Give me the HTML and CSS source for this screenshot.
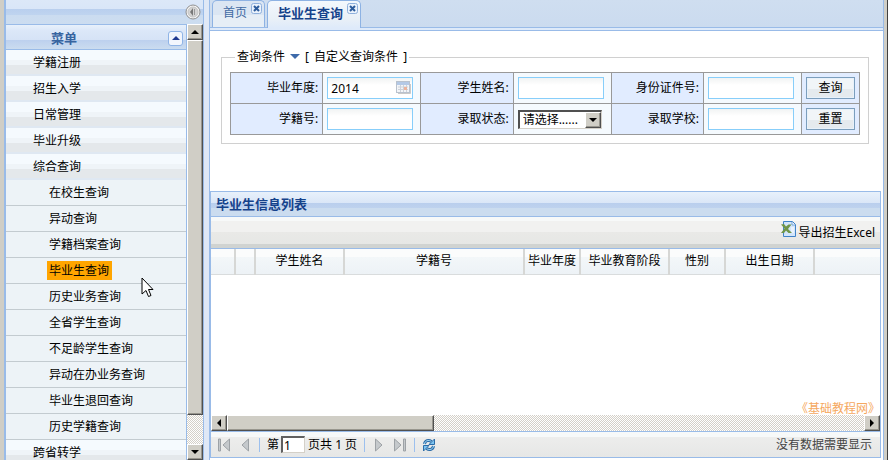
FILE: index.html
```html
<!DOCTYPE html>
<html lang="zh-CN">
<head>
  <meta charset="UTF-8">
  <title>毕业生查询</title>
  <link rel="stylesheet" href="styles.css">
</head>
<body>
<div class="page">
  <aside class="sidebar">
    <div class="side-top">
      <button type="button" class="collapse" aria-label="收起">
        <svg width="16" height="16" viewBox="0 0 16 16"><circle cx="8" cy="8" r="7" fill="#f4f4f4" stroke="#8f8f8f"/><circle cx="8" cy="8" r="5" fill="#d4d4d4" stroke="#c4c4c4"/><path d="M8 4v8L5 8z" fill="#777"/><path d="M9.500 5v6" stroke="#999"/></svg>
      </button>
    </div>
    <div class="side-body">
      <nav class="menu">
        <div class="menu-head">
          <span>菜单</span>
          <button type="button" class="toggle" aria-label="折叠"><i class="up"></i></button>
        </div>
        <ul>
          <li class="group"><a href="#">学籍注册</a></li>
          <li class="group"><a href="#">招生入学</a></li>
          <li class="group"><a href="#">日常管理</a></li>
          <li class="group"><a href="#">毕业升级</a></li>
          <li class="group"><a href="#">综合查询</a></li>
          <li class="item"><a href="#">在校生查询</a></li>
          <li class="item"><a href="#">异动查询</a></li>
          <li class="item"><a href="#">学籍档案查询</a></li>
          <li class="item"><a href="#" class="current">毕业生查询</a></li>
          <li class="item"><a href="#">历史业务查询</a></li>
          <li class="item"><a href="#">全省学生查询</a></li>
          <li class="item"><a href="#">不足龄学生查询</a></li>
          <li class="item"><a href="#">异动在办业务查询</a></li>
          <li class="item"><a href="#">毕业生退回查询</a></li>
          <li class="item"><a href="#">历史学籍查询</a></li>
          <li class="group"><a href="#">跨省转学</a></li>
        </ul>
      </nav>
      <div class="scroll vertical">
        <button type="button" class="raised arrow" aria-label="向上"><i class="up"></i></button>
        <div class="raised thumb"></div>
        <button type="button" class="raised arrow" aria-label="向下"><i class="down"></i></button>
      </div>
    </div>
  </aside>

  <main class="main">
    <div class="tabs">
      <div class="tab">
        <a href="#">首页</a>
        <button type="button" class="close" aria-label="关闭"><svg width="11" height="11" viewBox="0 0 11 11"><rect x=".5" y=".5" width="10" height="10" rx="2" fill="#eaf2fc" stroke="#8fb0dc"/><path d="M3 3l5 5M8 3l-5 5" stroke="#2d5c9c" stroke-width="2"/></svg></button>
      </div>
      <div class="tab active">
        <a href="#">毕业生查询</a>
        <button type="button" class="close" aria-label="关闭"><svg width="11" height="11" viewBox="0 0 11 11"><rect x=".5" y=".5" width="10" height="10" rx="2" fill="#eaf2fc" stroke="#8fb0dc"/><path d="M3 3l5 5M8 3l-5 5" stroke="#2d5c9c" stroke-width="2"/></svg></button>
      </div>
    </div>

    <form class="search">
      <fieldset>
        <legend>查询条件<i class="drop"></i>[ <a href="#">自定义查询条件</a> ]</legend>
        <table class="conditions">
          <colgroup><col><col class="field"><col><col class="field"><col><col class="field"><col class="action"></colgroup>
          <tr>
            <th><label for="year">毕业年度:</label></th>
            <td>
              <div class="date">
                <input type="text" id="year" value="2014">
                <svg width="15" height="13" viewBox="0 0 15 13"><rect x=".5" y=".5" width="13" height="11" fill="#f3f5f8" stroke="#b9c2ce"/><path d="M1 1h12v3H1z" fill="#b4c9e6"/><path d="M2 6h10M2 8.500h10M4.500 4v7M7.500 4v7M10.500 4v7" stroke="#cdd2da"/><path d="M8 6h3v3H8z" fill="#ebb39c"/><path d="M2 12.500h12.500V3" fill="none" stroke="#c9c9c9"/></svg>
              </div>
            </td>
            <th><label for="name">学生姓名:</label></th>
            <td><input type="text" id="name"></td>
            <th><label for="idno">身份证件号:</label></th>
            <td><input type="text" id="idno"></td>
            <th class="act"><button type="submit">查询</button></th>
          </tr>
          <tr>
            <th><label for="code">学籍号:</label></th>
            <td><input type="text" id="code"></td>
            <th><label for="status">录取状态:</label></th>
            <td>
              <div class="pick">
                <select id="status"><option>请选择......</option></select>
                <span class="raised"><i class="down"></i></span>
              </div>
            </td>
            <th><label for="school">录取学校:</label></th>
            <td><input type="text" id="school"></td>
            <th class="act"><button type="reset">重置</button></th>
          </tr>
        </table>
      </fieldset>
    </form>

    <section class="panel">
      <h2>毕业生信息列表</h2>
      <div class="toolbar">
        <button type="button">
          <svg width="16" height="16" viewBox="0 0 16 16"><path d="M2.500.5h9l3 3v12h-12z" fill="#d3e5fa" stroke="#3f83c8"/><path d="M11 1v3h3" fill="#fff" stroke="#6fa3da"/><path d="M10 7h3M10 9h3M10 11h3" stroke="#fff"/><path d="M0 3.500l3-.5 2 2.500L7.500 3.500h3L7 8l4 4H7.500L5 9.500 3 12H0l3.500-4.500z" fill="#6f9548"/></svg>
          导出招生Excel
        </button>
      </div>
      <div class="grid">
        <table>
          <colgroup><col class="w24"><col class="w20"><col class="w89"><col class="w180"><col class="w56"><col class="w89"><col class="w56"><col class="w89"><col></colgroup>
          <thead>
            <tr><th></th><th></th><th>学生姓名</th><th>学籍号</th><th>毕业年度</th><th>毕业教育阶段</th><th>性别</th><th>出生日期</th><th></th></tr>
          </thead>
        </table>
        <span class="mark">《基础教程网》</span>
      </div>
      <div class="scroll">
        <button type="button" class="raised arrow" aria-label="向左"><i class="left"></i></button>
        <div class="raised thumb"></div>
        <button type="button" class="raised arrow" aria-label="向右"><i class="right"></i></button>
      </div>
      <div class="paging">
        <button type="button" aria-label="首页"><svg width="14" height="14" viewBox="0 0 14 14"><path d="M1.500 1h2v12h-2zM12.500 1v12L6 7z" fill="#c5c9cc" stroke="#9da2a6"/></svg></button>
        <button type="button" aria-label="上一页"><svg width="14" height="14" viewBox="0 0 14 14"><path d="M10.500 1v12L4 7z" fill="#c5c9cc" stroke="#9da2a6"/></svg></button>
        <span class="sep"></span>
        <label for="pageno">第</label><input type="text" id="pageno" value="1">
        <span class="total">页共 1 页</span>
        <span class="sep"></span>
        <button type="button" aria-label="下一页"><svg width="14" height="14" viewBox="0 0 14 14"><path d="M3.500 1v12L10 7z" fill="#c5c9cc" stroke="#9da2a6"/></svg></button>
        <button type="button" aria-label="末页"><svg width="14" height="14" viewBox="0 0 14 14"><path d="M10.500 1h2v12h-2zM1.500 1v12L8 7z" fill="#c5c9cc" stroke="#9da2a6"/></svg></button>
        <span class="sep"></span>
        <button type="button" aria-label="刷新"><svg width="14" height="14" viewBox="0 0 14 14"><path d="M2.500 6C3 2.500 6.500 1.500 9.500 3.500M11.500 8C11 11.500 7.500 12.500 4.500 10.500" fill="none" stroke="#2d6da8" stroke-width="3"/><path d="M2.500 6C3 2.500 6.500 1.500 9.500 3.500M11.500 8C11 11.500 7.500 12.500 4.500 10.500" fill="none" stroke="#a5dcf8"/><path d="M12.500 1v5.500H7zM1.500 13V7.500H7z" fill="#7cc4f0" stroke="#2d6da8"/></svg></button>
        <span class="msg">没有数据需要显示</span>
      </div>
    </section>
  </main>
</div>
<svg class="pointer" width="13" height="21" viewBox="0 0 13 21"><path d="M1 1v16l4-3.500 2.500 6 2.500-1-2.500-6H12z" fill="#fff" stroke="#000"/></svg>
</body>
</html>
```

FILE: styles.css
```css
* {
  box-sizing: border-box;
}
body {
  margin: 0;
  font: 12px/16px "Noto Sans", "Noto Sans CJK SC", sans-serif;
  color: #000;
  background: #dfe8f6;
}
a {
  color: inherit;
  text-decoration: none;
}
button, input, select {
  font: inherit;
  color: inherit;
  margin: 0;
  padding: 0;
}
button {
  border: 0;
  background: none;
}
svg {
  display: block;
}
.page {
  display: flex;
  gap: 5px;
  height: 100vh;
  border-left: 4px solid #d0cec6;
  border-right: 1px solid #404040;
  box-shadow: inset -3px 0 #d0cec6;
  padding-right: 3px;
  overflow: hidden;
}

/* left menu */
.sidebar {
  display: flex;
  flex-direction: column;
  width: 200px;
  flex: none;
  border-left: 2px solid #99bbe8;
  border-right: 1px solid #99bbe8;
}
.side-top {
  display: flex;
  justify-content: flex-end;
  align-items: center;
  height: 24px;
  flex: none;
  padding-right: 2px;
  background: linear-gradient(#dce8f8 0, #d9e6f8 9px, #b9cfee 9px, #bfd4ef 15px, #cbdcf0 15px, #ccddf0);
}
.side-body {
  display: flex;
  flex: 1;
  min-height: 0;
}
.menu {
  flex: 1;
  overflow: hidden;
  border-top: 1px solid #99bbe8;
  border-right: 1px solid #99bbe8;
}
.menu-head {
  display: flex;
  align-items: center;
  justify-content: space-between;
  height: 25px;
  padding: 2px 3px 0 45px;
  color: #3764a0;
  font-weight: bold;
  font-size: 13px;
  border-bottom: 1px solid #99bbe8;
  background: linear-gradient(#e8f1fb 0, #dbe7f8 6px, #d6e3f6 15px, #bcd0ee 15px, #cbdcef);
}
.toggle {
  display: flex;
  align-items: center;
  justify-content: center;
  width: 15px;
  height: 15px;
  border: 1px solid #8fb4e6;
  border-radius: 3px;
  background: #f2f6fd;
  color: #203a90;
}
.menu ul {
  list-style: none;
  margin: 0;
  padding: 0;
}
.menu li {
  display: flex;
  align-items: center;
  height: 26px;
}
.group {
  padding-left: 27px;
  border-bottom: 2px solid #dfe8f2;
  background: linear-gradient(#f5fafe 10px, #eff4f8 10px, #eff4f8 15px, #e4e8eb 15px);
}
.group a {
  padding-top: 2px;
}
.item {
  padding-left: 41px;
  border-bottom: 1px solid #c3cbd0;
  background: #edf3f7;
}
.item a {
  padding: 2px 3px 1px 2px;
}
.item .current {
  background: #ffa500;
}

/* classic scrollbars */
.raised {
  border: 1px solid #fff;
  border-right-color: #505050;
  border-bottom-color: #505050;
  box-shadow: inset -1px -1px #98968e;
  background: #d0cec6;
}
.scroll {
  display: flex;
  height: 16px;
  flex: none;
  background: repeating-conic-gradient(#d4d0c8 0 25%, #fff 0 50%) 0 0 / 2px 2px;
}
.scroll .arrow {
  display: flex;
  align-items: center;
  justify-content: center;
  width: 16px;
  height: 16px;
  flex: none;
}
.scroll .thumb {
  width: 31%;
  margin-right: auto;
}
.scroll.vertical {
  flex-direction: column;
  width: 16px;
  height: auto;
}
.vertical .thumb {
  width: 16px;
  height: 86%;
  margin: 0 0 auto;
}
.up, .down, .left, .right {
  width: 0;
  height: 0;
  border: 4px solid transparent;
}
.up {
  border-top: 0;
  border-bottom-color: currentColor;
}
.down {
  border-bottom: 0;
  border-top-color: currentColor;
}
.left {
  border-left: 0;
  border-right-color: currentColor;
}
.right {
  border-right: 0;
  border-left-color: currentColor;
}

/* tabs */
.main {
  display: flex;
  flex-direction: column;
  flex: 1;
  min-width: 0;
  border-left: 1px solid #99bbe8;
  border-right: 1px solid #99bbe8;
  background: #fff;
}
.tabs {
  display: flex;
  gap: 2px;
  height: 31px;
  flex: none;
  padding: 0 2px 3px;
  border-bottom: 1px solid #99bbe8;
  background: linear-gradient(#cfdef0, #cbdbef 27px, #99bbe8 27px, #99bbe8 28px, #deeafa 28px);
}
.tab {
  display: flex;
  justify-content: space-between;
  width: 53px;
  height: 27px;
  padding: 4px 2px 0 10px;
  border: 1px solid #8db2e3;
  border-bottom: 0;
  border-radius: 5px 5px 0 0;
  color: #416aa3;
  background: linear-gradient(#dbe6f3 14px, #e6eef6 14px);
}
.tab.active {
  width: 94px;
  height: 28px;
  font-weight: bold;
  font-size: 13px;
  color: #15428b;
  background: linear-gradient(#f3f8fd, #e9f0f7 18px, #deeafa);
}
.close {
  width: 11px;
  height: 11px;
}
.tab .close {
  margin-top: -2px;
}

/* search form */
.search {
  flex: none;
  padding: 18px 14px 47px 11px;
}
fieldset {
  min-width: 0;
  margin: 0;
  padding: 7px 8px 8px;
  border: 1px solid #d0d0d0;
}
legend {
  margin-left: 5px;
  padding: 0 2px;
  white-space: pre;
}
legend a {
  margin: 0 2px;
}
.drop {
  display: inline-block;
  margin: 0 5px 2px;
  border: 5px solid transparent;
  border-top-color: #3e6aaa;
  border-bottom: 0;
}
.conditions {
  width: 100%;
  table-layout: fixed;
  border-collapse: collapse;
}
.conditions .field {
  width: 98px;
}
.conditions .action {
  width: 58px;
}
.conditions th, .conditions td {
  height: 31px;
  padding: 0 4px;
  border: 1px solid #999;
  font-weight: normal;
  text-align: right;
  background: #e1ecff;
}
.conditions td {
  text-align: left;
  background: #f5fafe;
}
.conditions input {
  display: block;
  width: 86px;
  height: 22px;
  padding: 1px 3px 0;
  border: 1px solid #87cefa;
  background: linear-gradient(#f1f3f3, #fff 7px);
}
.conditions button {
  display: block;
  width: 49px;
  height: 22px;
  border: 1px solid #7b9ebd;
  background: linear-gradient(#f1f5f8 11px, #e5eaee 11px);
  box-shadow: inset 0 0 0 1px #e8f1fa;
}
.date, .pick {
  position: relative;
  width: 86px;
}
.date svg {
  position: absolute;
  right: 2px;
  top: 4px;
}
.pick select {
  display: block;
  width: 84px;
  height: 19px;
  padding-left: 3px;
  appearance: none;
  border: 1px solid #d4d0c8;
  border-top: 2px solid #505050;
  border-left: 2px solid #505050;
  border-radius: 0;
  background: #fff;
}
.pick .raised {
  position: absolute;
  right: 3px;
  top: 2px;
  display: flex;
  align-items: center;
  justify-content: center;
  width: 16px;
  height: 16px;
  pointer-events: none;
}

/* result list */
.panel {
  display: flex;
  flex-direction: column;
  flex: 1;
  min-height: 0;
  margin: 0 2px 2px 0;
  border: 1px solid #99bbe8;
}
.panel h2 {
  margin: 0;
  padding: 4px 5px;
  height: 25px;
  flex: none;
  font-size: 13px;
  color: #15428b;
  border-bottom: 1px solid #99bbe8;
  background: linear-gradient(#e8f1fb 0, #dae6f7 11px, #b9ceed 11px, #bed2ee 16px, #cbdcef 16px);
}
.toolbar {
  display: flex;
  justify-content: flex-end;
  height: 32px;
  flex: none;
  padding: 3px 5px 0;
  border-bottom: 1px solid #99bbe8;
  background: linear-gradient(#f7f9f9 4px, #f1f1f0 4px, #f1f1f0 15px, #e9e9e7 15px, #e6e7e5 27px, #d0d3d1 27px);
}
.toolbar button {
  display: flex;
  gap: 2px;
  height: 21px;
  align-items: flex-end;
}
.toolbar svg {
  margin-bottom: 4px;
}
.grid {
  position: relative;
  flex: 1;
}
.grid table {
  width: 100%;
  table-layout: fixed;
  border-collapse: collapse;
}
.grid th {
  height: 25px;
  padding: 0;
  font-weight: normal;
  white-space: nowrap;
  border-right: 2px solid #d6d7d5;
  border-bottom: 1px solid #d9dcdd;
  background: linear-gradient(#fbfcfc 8px, #f3f7f9 8px, #edf2f6);
}
.grid th:last-child {
  border-right: 0;
}
.w20 {
  width: 20px;
}
.w24 {
  width: 24px;
}
.w56 {
  width: 56px;
}
.w89 {
  width: 89px;
}
.w180 {
  width: 180px;
}
.mark {
  position: absolute;
  right: 0;
  bottom: -2px;
  color: #f5a860;
}
.paging {
  display: flex;
  align-items: center;
  height: 26px;
  flex: none;
  padding: 0 8px 0 6px;
  border-top: 1px solid #99bbe8;
  background: linear-gradient(#f7f9f9 5px, #ededec 5px, #e6e7e6);
}
.paging button {
  margin-right: 7px;
}
.sep {
  width: 1px;
  height: 14px;
  margin-right: 7px;
  background: #9cc0ee;
}
.paging input {
  width: 24px;
  height: 17px;
  margin: 0 2px;
  padding-left: 1px;
  border: 1px solid #d4d0c8;
  border-top: 2px solid #606060;
  border-left: 2px solid #606060;
  background: #fff;
}
.paging .total {
  margin: 0 7px 0 1px;
}
.msg {
  margin-left: auto;
  color: #444;
}
.pointer {
  position: absolute;
  left: 141px;
  top: 277px;
}
```
